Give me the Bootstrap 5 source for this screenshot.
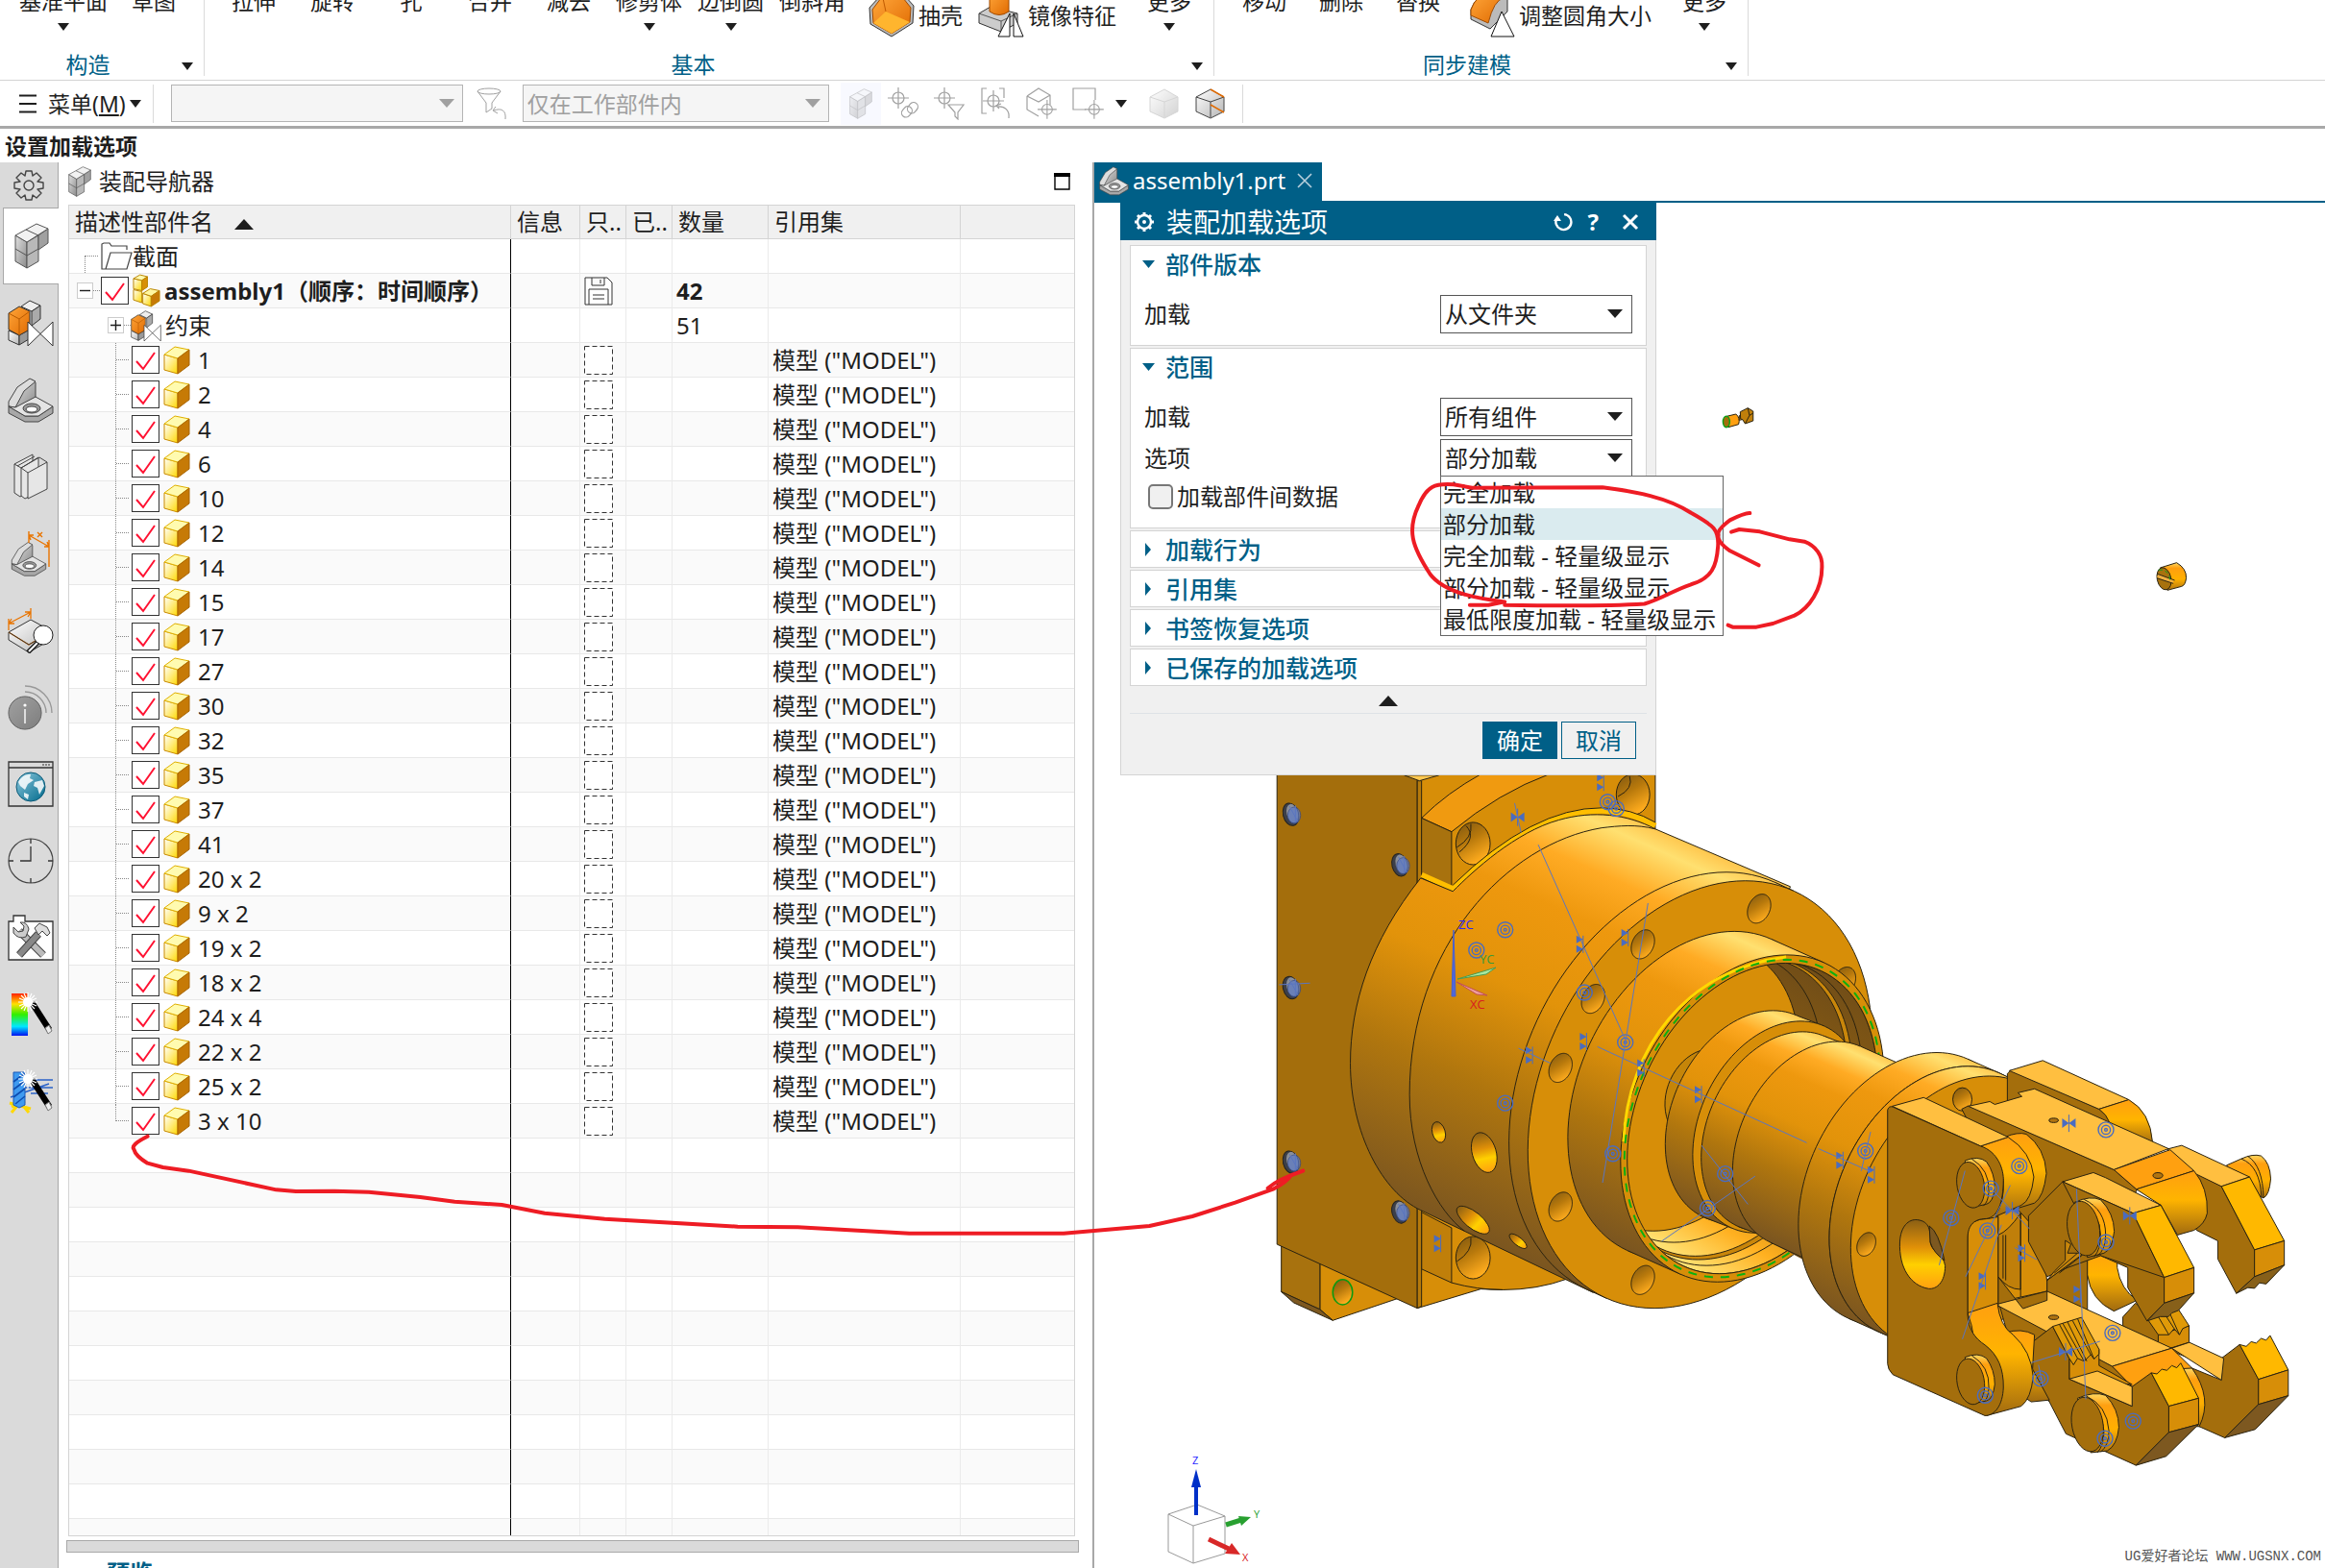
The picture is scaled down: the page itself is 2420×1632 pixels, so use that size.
<!DOCTYPE html>
<html lang="zh-CN">
<head>
<meta charset="utf-8">
<meta name="viewport" content="width=device-width, initial-scale=1">
<title>装配加载选项</title>
<link href="https://cdn.jsdelivr.net/npm/bootstrap@5.3.0/dist/css/bootstrap.min.css" rel="stylesheet">
<style>
:root{--nx-blue:#005f87;--nx-gray:#a8a8a8}
html,body{height:100%}
body{font-family:"Noto Sans","Noto Sans CJK SC",sans-serif;font-size:24px;line-height:32px;color:#1e1e1e;background:#fff;overflow:hidden}
button{color:inherit}
svg{display:block;flex:none}
.nx-app{min-height:100vh;height:100vh}
.bare{background:none;border:0;padding:0}
/* ribbon */
.ribbon{height:84px;font-size:23px;border-bottom:1px solid #d4d4d4;overflow:hidden}
.rgroup{height:79px;border-right:1px solid #dadada}
.rbody{height:53px;overflow:hidden}
.rtool{width:82px;height:53px;line-height:32px;display:flex;flex-direction:column;align-items:center;justify-content:flex-start}
.rtool>span{display:block;margin-top:-15px}
.rtool.wide{width:85px}
.rtool.more{width:78px}
.caret{display:inline-block;width:0;height:0;border:6px solid transparent;border-top:8px solid #1e1e1e;border-bottom:0;flex:none}
.rtool .caret{display:block;margin:7px auto 0}
.rside{height:32px;gap:4px;white-space:nowrap}
.rname{height:26px;line-height:28px;color:var(--nx-blue);padding-right:5px}
.rname .bare{width:24px;height:22px;line-height:22px}
/* selection toolbar */
.selbar{height:50px;border-bottom:3px solid var(--nx-gray);font-size:23px}
.vsep{width:1px;height:40px;background:#dadada}
.combo{appearance:none;height:39px;border:1px solid #b4b4b4;border-radius:0;color:#a0a0a0;opacity:1;padding:0 4px;font-size:23px;background:#f5f5f5 url("data:image/svg+xml,%3Csvg xmlns='http://www.w3.org/2000/svg' width='16' height='10'%3E%3Cpath d='M0 0h16l-8 9z' fill='%23a0a0a0'/%3E%3C/svg%3E") no-repeat right 8px center}
.selbtn{width:48px;height:44px}
.selbtn.on{width:42px;background:#f8f9ff}
.prompt-line{height:35px;font-size:23px;font-weight:700;padding-left:5px;line-height:36px}
/* resource bar */
.resbar{width:61px;background:#dadada;border-right:1px solid var(--nx-gray)}
.resbtn{height:80px;width:60px;flex:none;padding-left:4px}
.resbtn.first{height:47px;padding-left:0}
.resbtn.on{background:#fff;border:1px solid var(--nx-gray);border-right:0;width:58px;align-self:flex-end;margin-right:-1px;padding-left:0}
/* navigator */
.navpane{width:1076px;flex:none;padding-left:10px}
.navhead{height:44px;padding:0 23px 4px 0;font-size:24px}
.navgrid{width:1048px;flex:1 1 0;min-height:0;overflow:hidden;border:1px solid #d4d4d4}
.tree{table-layout:fixed;width:1046px;border-collapse:separate;border-spacing:0}
.tree th{height:35px;background:#f0f0f0;font-weight:400;padding:0 6px;border-right:1px solid #d4d4d4;border-bottom:1px solid #d4d4d4;white-space:nowrap;overflow:hidden}
.tree td{height:36px;padding:0 4px;border-right:1px solid #ebebeb;border-bottom:1px solid #e8e8e8;white-space:nowrap;line-height:34px}
.tree td:first-child{border-right:1px solid #000;padding:0}
.tree tr:nth-child(even) td{background:#fafafa}
.tree th:last-child,.tree td:last-child{border-right:0}
.nm{height:35px}
.tick{appearance:none;width:29px;height:29px;border:1px solid #333;background:#fff;margin:0;flex:none}
.tick:checked{background:#fff url("data:image/svg+xml,%3Csvg xmlns='http://www.w3.org/2000/svg' width='27' height='27'%3E%3Cpath d='M4 15l7 8L23 6' fill='none' stroke='%23ff1232' stroke-width='2'/%3E%3C/svg%3E")}
.branch{width:17px;height:35px;margin-left:48px;border-left:1px dotted #888;display:flex;align-items:center;flex:none}
.branch::after{content:"";width:13px;border-top:1px dotted #888}
.branch.end{height:18px;align-self:flex-start;align-items:flex-end}
.branch.top{height:18px;margin-left:16px;align-self:flex-end;align-items:flex-start}
.toggle{width:17px;height:17px;border:1px solid #ccc;background:#fff;flex:none}
.stub{width:7px;border-top:1px dotted #888}
.split{height:13px;width:1054px;margin:4px 0 0 -2px;background:#dadada;border:1px solid var(--nx-gray)}
.preview{height:16px;overflow:hidden;padding:5px 0 0 40px;font-weight:700;color:var(--nx-blue);line-height:32px}
/* graphics window */
.gfx{border-left:2px solid var(--nx-gray);min-width:0}
.ptabs{height:42px;border-bottom:2px solid var(--nx-blue)}
.ptab{width:237px;height:40px;background:var(--nx-blue);color:#fff;padding:0 10px 2px 5px}
.stage{position:relative;flex:1 1 0;min-height:0;overflow:hidden}
.stage>svg{position:absolute;left:0;top:0;width:100%;height:100%}
.stamp{position:absolute;right:4px;bottom:2px;font:14px/20px "Liberation Mono","Noto Sans CJK SC",monospace;color:#555}
/* dialog */
.dlg{position:absolute;left:27px;top:0;width:558px;height:596px;background:#f0f0f0;border:1px solid #d4d4d4;border-top:0}
.dlgtitle{height:39px;margin:0 -1px;background:var(--nx-blue);color:#fff;font-size:28px;padding:0 18px 0 14px}
.dlgbody{padding:5px 9px 0}
.sect{border:1px solid #d4d4d4;background:#fff;margin-bottom:2px}
.secthead{height:37px;font-size:25px;font-weight:500;color:var(--nx-blue);padding-left:12px;gap:11px}
.sect label{color:#1e1e1e}
.fld{height:43px;padding:0 14px}
.drop{appearance:none;width:200px;height:40px;border:1px solid #555;border-radius:0;background:#fff url("data:image/svg+xml,%3Csvg xmlns='http://www.w3.org/2000/svg' width='16' height='10'%3E%3Cpath d='M0 0h16l-8 9z' fill='%231e1e1e'/%3E%3C/svg%3E") no-repeat right 9px center;padding:0 4px;color:#1e1e1e}
.dcheck{appearance:none;width:26px;height:26px;border:2px solid #777;border-radius:5px;background:#f0f0f0;margin:0}
.tri-d,.tri-r{width:13px;flex:none}
.optlist{position:absolute;left:332px;top:284px;width:295px;border:1px solid #666;background:#fff;z-index:3}
.optlist button{display:block;width:100%;height:33px;padding-left:2px;text-align:left;white-space:nowrap}
.optlist .on{background:#daebef}
.dlgbtn{width:78px;height:39px;border:1px solid var(--nx-blue);border-radius:0;padding:0;font-size:24px;line-height:34px;color:var(--nx-blue)}
.dlgbtn.ok{background:var(--nx-blue);color:#fff}
.ink{position:absolute;left:0;top:0;width:100%;height:100%;pointer-events:none;z-index:5}
.ink path{fill:none;stroke:#ee1c24;stroke-width:4px;stroke-linecap:round;stroke-linejoin:round;vector-effect:non-scaling-stroke}
#cad *{vector-effect:non-scaling-stroke}
#cad .ln{fill:none;stroke:#2b2310;stroke-width:1}
#cad .f{stroke:#2b2310;stroke-width:1}
#cad .bl{fill:none;stroke:#5b76c0;stroke-width:1}
</style>
<script src="https://cdn.jsdelivr.net/npm/bootstrap@5.3.0/dist/js/bootstrap.bundle.min.js"></script>
</head>
<body>
<svg width="0" height="0" class="position-absolute" aria-hidden="true">
<defs>
<linearGradient id="gy" x1="0" y1="0" x2="1" y2="1"><stop offset="0" stop-color="#fff"/><stop offset="1" stop-color="#ffd800"/></linearGradient>
<linearGradient id="gg" x1="0" y1="0" x2="1" y2="1"><stop offset="0" stop-color="#fff"/><stop offset="1" stop-color="#b5b5b5"/></linearGradient>
<linearGradient id="gd" x1="0" y1="0" x2="1" y2="1"><stop offset="0" stop-color="#e0e0e0"/><stop offset="1" stop-color="#8a8a8a"/></linearGradient>
<linearGradient id="go" x1="0" y1="0" x2="1" y2="1"><stop offset="0" stop-color="#ffa63a"/><stop offset="1" stop-color="#e06a00"/></linearGradient>
<linearGradient id="gt" x1="0" y1="0" x2="1" y2="1"><stop offset="0" stop-color="#8cc7dc"/><stop offset="1" stop-color="#006a8c"/></linearGradient>
<linearGradient id="gr" x1="0" y1="0" x2="0" y2="1"><stop offset="0" stop-color="#ff2000"/><stop offset=".25" stop-color="#ffe000"/><stop offset=".5" stop-color="#30f000"/><stop offset=".78" stop-color="#00e8ff"/><stop offset="1" stop-color="#0010f0"/></linearGradient>
</defs>
<symbol id="i-cube" viewBox="0 0 28 30"><path d="M1 9L15 13V29L1 25z" fill="url(#gy)" stroke="#c98a00"/><path d="M1 9L12 1l15 3-12 9z" fill="#fffbb0" stroke="#e0b000"/><path d="M15 13L27 4v16L15 29z" fill="#c67a06" stroke="#a86400"/></symbol>
<symbol id="i-asm" viewBox="0 0 30 36"><g stroke="#b88400"><path d="M1 5l9 2v11L1 16z" fill="url(#gy)"/><path d="M1 5l7-4 8 2-6 4z" fill="#fffbb0"/><path d="M10 7l6-4v11l-6 4z" fill="#d89008"/><path d="M1 17l9 2v12l-9-3z" fill="url(#gy)"/><path d="M11 21l9 3v11l-9-3z" fill="url(#gy)"/><path d="M11 21l8-5 10 2-9 6z" fill="#fff7a0"/><path d="M20 24l9-6v11l-9 6z" fill="#c67a06"/></g></symbol>
<symbol id="i-blocks" viewBox="0 0 36 48"><g stroke="#555"><path d="M1 13l12 7v27L1 40z" fill="url(#gd)"/><path d="M13 20l12-7v27l-12 7z" fill="#b8b8b8"/><path d="M25 13l10-7v15l-10 7z" fill="#a0a0a0"/><path d="M1 13L23 1l12 5-22 14z" fill="#f2f2f2"/><path d="M1 27l12 7 12-7M12 7l13 6" fill="none"/></g></symbol>
<symbol id="i-con" viewBox="0 0 48 48"><g stroke="#333"><path d="M14 7l9-6 11 5-9 6z" fill="#eee"/><path d="M25 12l9-6v14l-9 7z" fill="#aaa"/><path d="M1 32l11 5v10L1 42z" fill="url(#gg)"/><path d="M12 37l10-6v10l-10 6z" fill="#999"/><path d="M1 14L12 7l11 5v19l-11 6-11-6z" fill="url(#go)"/><path d="M1 14l11 6 11-8M12 20v17" fill="none" stroke="#b85a00"/><path d="M21 23v25l26-25v25z" fill="#fff"/></g></symbol>
<symbol id="i-brk" viewBox="0 0 48 48"><g stroke="#444" stroke-linejoin="round"><path d="M8 29L11 17 25 3l4 3v20L8 32z" fill="url(#gd)"/><path d="M1 31V26L10 11 23 2l6 3-12 10L8 32z" fill="#ddd"/><path d="M1 31v7l17 9h14l15-9v-7L32 41H18z" fill="#a8a8a8"/><path d="M1 31l7 1 21-11 18 10-15 10H18z" fill="#e4e4e4"/><ellipse cx="25" cy="33" rx="9" ry="5" fill="#999"/><ellipse cx="25" cy="34" rx="6" ry="3" fill="#fff"/></g></symbol>
<symbol id="i-book" viewBox="0 0 36 48"><g fill="#e6e6e6" stroke="#444"><path d="M1 11L20 1v36L7 45l-6-4z"/><path d="M8 15L26 4v36L12 47l-4-3z"/><path d="M15 20L35 9v28L15 47z"/><path d="M1 11l7 4 7 5M8 15L27 4l8 5M4 13L22 3" fill="none"/></g></symbol>
<symbol id="i-gear" viewBox="0 0 34 34"><path d="M14 2h6l1 5 4-3 5 5-4 4 6 1v6l-6 1 4 4-5 5-4-3-1 5h-6l-1-5-4 3-5-5 4-4-6-1v-6l6-1-4-4 5-5 4 3z" fill="none" stroke="#444" stroke-width="1.4" stroke-linejoin="round"/><circle cx="17" cy="17" r="5" fill="none" stroke="#444" stroke-width="1.4"/></symbol>
<symbol id="i-wand" viewBox="0 0 48 48"><path d="M23 14l5-4 18 28-5 4z" fill="#000"/><path d="M39 38l4-3 3 6-4 3z" fill="#eee" stroke="#777"/><path d="M21 1v20M11 11h20M14 4l14 14M28 4L14 18M25 2l-8 18M17 2l8 18M12 7l18 8M12 15l18-8" stroke="#fff" stroke-width="1.2"/><circle cx="21" cy="11" r="5" fill="#fff"/></symbol>
<symbol id="i-mark" viewBox="-8 -8 16 16" overflow="visible"><g fill="none" stroke="#4a6cc0" stroke-width="1.4"><circle r="8"/><circle r="4.6"/><circle r="1.4"/></g></symbol>
<symbol id="i-tie" viewBox="-8 -8 16 16" overflow="visible"><path d="M-7-5v10L0 0zM7-5v10L0 0z" fill="#4a6cc0"/><path d="M0-9V9" stroke="#4a6cc0"/></symbol>
<symbol id="i-tiev" viewBox="-8 -8 16 16" overflow="visible"><path d="M-4-9v8L3-5zM-4 9V1L3 5z" fill="#4a6cc0"/><path d="M3-9V9" stroke="#4a6cc0"/></symbol>
</svg>

<div class="nx-app d-flex flex-column position-relative">
<header class="ribbon d-flex">
  <section class="rgroup d-flex flex-column" style="width:213px">
    <div class="rbody d-flex" style="padding-left:20px">
      <button class="bare rtool" style="width:92px"><span>基准平面</span><i class="caret"></i></button>
      <button class="bare rtool" style="width:96px"><span>草图</span></button>
    </div>
    <div class="rname d-flex"><span class="flex-fill text-center">构造</span><button class="bare" aria-label="构造选项"><i class="caret"></i></button></div>
  </section>
  <section class="rgroup d-flex flex-column" style="width:1051px">
    <div class="rbody d-flex" style="padding-left:10px">
      <button class="bare rtool"><span>拉伸</span></button><button class="bare rtool"><span>旋转</span></button><button class="bare rtool"><span>孔</span></button><button class="bare rtool"><span>合并</span></button><button class="bare rtool"><span>减去</span></button>
      <button class="bare rtool wide"><span>修剪体</span><i class="caret"></i></button><button class="bare rtool wide"><span>边倒圆</span><i class="caret"></i></button><button class="bare rtool wide"><span>倒斜角</span></button>
      <button class="bare rside d-flex align-items-center ms-3">
        <svg width="48" height="56" viewBox="0 0 48 56"><path d="M1 20L12 8h26l9 10-1 18-22 14L2 37z" fill="#bbb" stroke="#333"/><path d="M4 22L13 10h23l8 10-1 15-19 12L5 36z" fill="url(#go)" stroke="#a04a00"/><path d="M5 36l13-12 25 11-19 12z" fill="#ffb52e"/><path d="M18 24L15 10" stroke="#c05a00"/></svg>抽壳</button>
      <button class="bare rside d-flex align-items-center ms-3">
        <svg width="48" height="56" viewBox="0 0 48 56"><path d="M1 26l12-7 28 7v10L24 45 1 36z" fill="#ccc" stroke="#333"/><path d="M1 26l23 8 17-8M24 34v11" fill="none" stroke="#555"/><path d="M12 4v20q10 7 20 0V4z" fill="url(#go)" stroke="#a04a00"/><path d="M33 26v24H21zM37 26v24h10z" fill="#fff" stroke="#111"/></svg>镜像特征</button>
      <button class="bare rtool more ms-3"><span>更多</span><i class="caret"></i></button>
    </div>
    <div class="rname d-flex"><span class="flex-fill text-center" style="padding-right:4px">基本</span><button class="bare" aria-label="基本选项"><i class="caret"></i></button></div>
  </section>
  <section class="rgroup d-flex flex-column" style="width:556px">
    <div class="rbody d-flex" style="padding-left:12px">
      <button class="bare rtool" style="width:80px"><span>移动</span></button><button class="bare rtool" style="width:80px"><span>删除</span></button><button class="bare rtool" style="width:80px"><span>替换</span></button>
      <button class="bare rside d-flex align-items-center" style="margin-left:13px">
        <svg width="48" height="56" viewBox="0 0 48 56"><path d="M2 22Q8 6 20 6h20v18L22 42 2 32z" fill="#bbb" stroke="#333"/><path d="M2 22Q8 6 20 6l16 4Q26 12 20 36L2 28z" fill="url(#go)" stroke="#a04a00"/><path d="M34 24l13 26H23z" fill="#fff" stroke="#111"/></svg>调整圆角大小</button>
      <button class="bare rtool more ms-3"><span>更多</span><i class="caret"></i></button>
    </div>
    <div class="rname d-flex"><span class="flex-fill text-center">同步建模</span><button class="bare" aria-label="同步建模选项"><i class="caret"></i></button></div>
  </section>
</header>

<nav class="selbar d-flex align-items-center" aria-label="选择条">
  <button class="bare d-flex align-items-center" style="padding-left:20px"><svg width="18" height="20" viewBox="0 0 18 20" class="me-2"><path d="M0 1.5h18M0 10h18M0 18.5h18" stroke="#1e1e1e" stroke-width="2"/></svg><span class="ms-1 me-1">菜单(<u>M</u>)</span><i class="caret"></i></button>
  <span class="vsep" style="margin:0 18px 0 12px"></span>
  <select class="combo" style="width:304px" disabled aria-label="类型过滤器"><option></option></select>
  <button class="bare d-flex align-items-center justify-content-center" style="width:62px" aria-label="重置过滤器"><svg width="34" height="34" viewBox="0 0 34 34" fill="none" stroke="#a0a0a0"><ellipse cx="13" cy="4" rx="12" ry="3"/><path d="M1 4l9 12v10l6-4v-6l9-12M20 20l-3 4 5 3M18 24c8-3 13 0 12 9"/></svg></button>
  <select class="combo" style="width:319px" disabled aria-label="选择范围"><option>仅在工作部件内</option></select>
  <button class="bare selbtn on d-flex align-items-center justify-content-center" style="margin-left:12px" aria-label="装配"><svg width="24" height="32" opacity=".35"><use href="#i-blocks"/></svg></button>
  <span class="d-flex" id="selicons"></span>
  <span class="vsep" style="margin-left:9px"></span>
</nav>
<div class="prompt-line">设置加载选项</div>

<main class="d-flex flex-fill" style="min-height:0">
  <aside class="resbar d-flex flex-column flex-shrink-0" id="resbar"></aside>
  <section class="navpane d-flex flex-column">
    <div class="navhead d-flex align-items-center">
      <svg width="24" height="32" class="me-2"><use href="#i-blocks"/></svg><span>装配导航器</span>
      <button class="bare ms-auto" aria-label="最大化"><svg width="17" height="18"><path d="M1 1h15v16H1z" fill="#fff" stroke="#000" stroke-width="1.4"/><path d="M0 2h17" stroke="#000" stroke-width="4"/></svg></button>
    </div>
    <div class="navgrid">
      <table class="tree">
        <colgroup><col style="width:460px"><col style="width:72px"><col style="width:48px"><col style="width:48px"><col style="width:100px"><col style="width:200px"><col></colgroup>
        <thead><tr><th>描述性部件名 <svg class="d-inline-block ms-3" width="20" height="11"><path d="M0 11L10 0l10 11z" fill="#1e1e1e"/></svg></th><th>信息</th><th>只..</th><th>已..</th><th>数量</th><th>引用集</th><th></th></tr></thead>
        <tbody id="rows"></tbody>
      </table>
    </div>
    <div class="split"></div>
    <div class="preview">预览</div>
  </section>

  <section class="gfx d-flex flex-column flex-fill">
    <div class="ptabs d-flex"><div class="ptab d-flex align-items-center">
      <svg width="31" height="36" class="me-1"><use href="#i-brk"/></svg><span>assembly1.prt</span>
      <button class="bare ms-auto" aria-label="关闭"><svg width="16" height="16"><path d="M1 1l14 14M15 1L1 15" stroke="#b8d0dc" stroke-width="1.6"/></svg></button></div></div>
    <div class="stage">
      <svg id="cad" viewBox="1139 211 1281 1421" preserveAspectRatio="xMinYMin slice" role="img" aria-label="装配模型">
        <defs>
          <linearGradient id="hole" x1="0" y1="0" x2=".5" y2="1"><stop offset="0" stop-color="#7b5512"/><stop offset=".5" stop-color="#b8790c"/><stop offset="1" stop-color="#ffac1e"/></linearGradient>
          <linearGradient id="arm" x1="0" y1="0" x2="0" y2="1"><stop offset="0" stop-color="#ff9f10"/><stop offset=".45" stop-color="#ffb400"/><stop offset="1" stop-color="#a06a10"/></linearGradient>
          <linearGradient id="cyl" x1="0" y1="0" x2="0" y2="1"><stop offset="0" stop-color="#ffd860"/><stop offset=".2" stop-color="#ff9f10"/><stop offset=".6" stop-color="#ffb000"/><stop offset="1" stop-color="#b07410"/></linearGradient>
          <linearGradient id="slot" x1="0" y1="0" x2="0" y2="1"><stop offset="0" stop-color="#8a5f14"/><stop offset=".4" stop-color="#e09008"/><stop offset=".65" stop-color="#ffd000"/><stop offset="1" stop-color="#ff9f10"/></linearGradient>
          <linearGradient id="wall" x1=".8" y1="0" x2=".3" y2="1"><stop offset="0" stop-color="#6f4c18"/><stop offset=".6" stop-color="#a8700c"/><stop offset=".85" stop-color="#ffb020"/><stop offset="1" stop-color="#ffe070"/></linearGradient>
          <clipPath id="bore"><circle r="396" transform="matrix(.71 0 -.1945 1 1151 941)"/></clipPath>
        </defs>
        <g id="base" transform="translate(1310 780) scale(.446429 .408163)">
          <path class="f" fill="#d78e08" d="M143 1310L325 1400L173 1456L143 1428z"/>
          <path class="f" fill="#a8720e" d="M53 1265L143 1310V1428L53 1383z"/>
          <path class="f" fill="#7d5820" d="M53 1383L143 1428L173 1456L82 1411z"/>
          <ellipse cx="196" cy="1384" rx="23" ry="32" fill="url(#hole)" stroke="#0a9a10" stroke-width="1.5"/>
          <path class="f" fill="#d78e08" d="M370 60H925V700H720V1350Q650 1378 570 1378L518 1376L370 1425z"/>
          <path class="f" fill="#c07f0a" d="M380 1180L450 1220V1360L380 1325z"/>
          <path class="ln" d="M450 1360Q510 1378 570 1378"/>
          <path class="f" fill="#a46e0c" d="M43 60H370V1425L43 1262z"/>
          <path class="f" fill="#b57a0c" d="M370 80H380V1420L370 1425z"/>
          <path class="f" fill="#ffc850" d="M340 66H420L375 80z"/>
          <path class="f" fill="#f09a10" d="M380 175Q440 110 520 62H680Q560 110 450 210z"/>
          <path class="f" fill="#a8720e" d="M380 175L450 210V352L380 318z"/>
          <ellipse class="f" cx="500" cy="240" rx="40" ry="54" fill="url(#hole)"/><path class="ln" d="M462 250Q500 225 495 190M468 262Q510 225 484 195"/>
          <ellipse class="f" cx="873" cy="115" rx="39" ry="52" fill="url(#hole)"/><path class="ln" d="M838 120Q875 100 865 68"/>
          <ellipse class="f" cx="500" cy="1296" rx="40" ry="54" fill="url(#hole)"/><path class="ln" d="M462 1306Q500 1280 495 1245"/>
          <path d="M380 320L453 356Q640 155 800 156Q870 158 925 195" fill="none" stroke="#ffbe00" stroke-width="6"/>
          <path class="ln" d="M380 328L453 364M453 346Q640 148 800 149Q870 150 925 186"/>
          <g id="solids"></g>
        </g>
        <g id="grip" transform="translate(1880 1040) scale(.344388 .377551)">
          <ellipse class="f" cx="472" cy="276" rx="29" ry="32" fill="url(#hole)"/>
          <path class="f" fill="#a46e0c" d="M608 205L618 196L885 303Q925 325 935 362L608 290z"/>
          <path class="f" fill="#ffbf40" d="M614 197L715 169L975 277L885 303z"/>
          <path class="f" fill="url(#arm)" d="M885 303L975 277Q1040 310 1047 395L925 400Q930 330 885 303z"/>
          <path class="f" fill="url(#cyl)" d="M1270 458L1315 440Q1350 425 1375 432Q1402 450 1404 495Q1400 540 1382 548L1340 530z"/>
          <path class="ln" d="M1315 440Q1372 460 1376 545M1335 433Q1380 460 1382 547"/>
          <path class="f" fill="#a46e0c" d="M1095 412L1255 516L1355 691V765L1300 811L1244 716V666L1180 637L1120 560z"/>
          <path class="f" fill="#ffbf40" d="M1092 413L1135 403L1340 490L1255 516L1165 476z"/>
          <path class="f" fill="#ffb800" d="M1255 516L1340 490L1445 666L1355 691z"/>
          <path class="f" fill="#d78e08" d="M1355 691L1445 666V733L1355 765z"/>
          <path class="f" fill="#87601a" d="M1355 765L1445 733L1390 785L1370 782L1355 797L1335 795L1300 811z"/>
          <path class="f" fill="#d78e08" d="M580 570H648L700 560L728 780V835L655 853L580 830z"/>
          <path class="f" fill="#c07f0a" d="M580 650Q610 640 648 590V800Q610 800 580 765z"/><path class="ln" d="M595 650V770M603 650V775M648 570V850"/>
          <path class="f" fill="#a46e0c" d="M470 303L490 294L930 470L1000 525L900 700L780 720L620 560z"/>
          <path class="f" fill="#ffbf40" d="M490 295L555 282L570 290L652 268L640 258L690 247L1095 412L930 470z"/>
          <path class="f" fill="#ffa010" d="M930 470L1100 415L1172 473L998 524z"/>
          <path class="f" fill="url(#arm)" d="M998 524L1172 473Q1215 520 1212 590Q1205 620 1172 637L1122 650L1072 568z"/>
          <ellipse class="f" cx="748" cy="334" rx="14" ry="6" fill="#b07410"/><ellipse class="f" cx="1063" cy="486" rx="15" ry="8" fill="#b07410"/>
          <path class="f" fill="#a46e0c" d="M728 775L850 690V862L728 830z"/>
          <path class="f" fill="url(#arm)" d="M850 700L940 680V740Q950 800 1000 830L930 860Q860 830 850 760z"/>
          <path class="f" fill="#a46e0c" d="M957 876L995 838L1060 880L1157 946V990L1030 940L957 900z"/>
          <path class="f" fill="#d78e08" d="M1064 925L1157 900V946L1100 962L1064 950z"/>
          <path class="f" fill="#e09a08" d="M1030 880L1125 855L1157 900L1138 908L1128 925L1112 908L1096 925L1064 925z"/><path class="ln" d="M1064 875L1096 925M1085 870L1112 908M1100 868L1128 925"/>
          <path class="f" fill="#a46e0c" d="M580 830L925 1012L985 1064L900 1110L735 1110L620 960z"/>
          <path class="f" fill="#ffbf40" d="M580 845V835L728 805L1105 962L925 1012z"/><path class="f" fill="#a46e0c" d="M580 765L655 853L728 830V805L580 840z"/>
          <ellipse class="f" cx="748" cy="877" rx="15" ry="6" fill="#b07410"/>
          <path class="f" fill="#ffa010" d="M925 1012L1105 962L1166 1017L985 1068z"/>
          <path class="f" fill="url(#cyl)" d="M1105 1020L1166 1017Q1215 1040 1218 1110Q1215 1165 1190 1178L1120 1178z"/>
          <path class="f" fill="#a46e0c" d="M1166 1017L1255 1050V990L1310 952L1367 1048V1117L1265 1209L1188 1178Q1230 1100 1166 1017z"/>
          <path class="f" fill="#ffbf40" d="M1105 962L1158 946L1262 990L1255 1050z"/>
          <path class="f" fill="#ffb800" d="M1310 952L1330 957L1345 944L1360 948L1375 935L1390 940L1402 927L1457 1022L1367 1048z"/>
          <path class="f" fill="#d78e08" d="M1367 1048L1457 1022V1093L1367 1117z"/>
          <path class="f" fill="#7d5820" d="M1367 1117L1457 1093L1357 1186L1265 1209z"/>
          <path class="f" fill="#a46e0c" d="M672 597L775 503L1072 568L1082 767V838L1030 887L972 795V740L890 707L790 740L728 765L672 668z"/>
          <path class="f" fill="#c9860a" d="M783 665L800 675L790 700L840 700L728 775L750 750L783 720z"/><path class="ln" d="M750 755L820 700M765 755L835 705"/>
          <path class="f" fill="#ffbf40" d="M775 503L868 478L905 492L1072 568L988 590z"/>
          <path class="f" fill="#a46e0c" d="M775 503L988 590L1082 767L890 707z"/>
          <path class="f" fill="#ffb800" d="M988 590L1072 568L1172 740L1082 767z"/>
          <path class="f" fill="#d78e08" d="M1082 767L1172 740V810L1082 838z"/>
          <path class="f" fill="#87601a" d="M1082 838L1172 810L1125 858L1105 865L1095 875L1070 875L1030 887z"/>
          <path class="f" fill="url(#cyl)" d="M810 560Q860 540 890 553Q930 590 931 640Q925 690 900 700L850 712z"/>
          <path class="ln" d="M840 552Q905 580 905 650Q905 690 880 708M825 556Q890 590 890 650Q890 690 870 710"/>
          <ellipse class="f" cx="838" cy="632" rx="48" ry="76" transform="rotate(-12 838 632)" fill="#a46e0c"/>
          <path class="f" fill="#d78e08" d="M795 990L885 965V1010L985 1062L795 1047z"/>
          <path class="f" fill="#a46e0c" d="M684 945L745 902L795 990V1047L985 1122V1068L1043 1030L1096 1122V1194L997 1285L785 1198L735 1110L684 1020z"/>
          <path class="f" fill="#ffbf40" d="M795 1047L880 1025L985 1068V1122z"/>
          <path class="f" fill="#e09a08" d="M745 902L832 877L885 965V978L870 992L860 980L840 998L820 990L808 1008L795 990z"/><path class="ln" d="M765 896L820 990M775 893L840 998M790 890L848 998M805 886L860 980M820 880L870 992"/>
          <path class="f" fill="#ffb800" d="M1043 1030L1060 1033L1075 1020L1090 1023L1105 1010L1120 1016L1132 1003L1186 1100L1096 1122z"/>
          <path class="f" fill="#d78e08" d="M1096 1122L1186 1100V1172L1096 1194z"/>
          <path class="f" fill="#7d5820" d="M1096 1194L1186 1172L1088 1260L997 1285z"/>
          <path class="f" fill="url(#cyl)" d="M820 1100Q870 1080 905 1092Q945 1130 945 1180Q940 1230 910 1245L860 1250z"/>
          <path class="ln" d="M845 1093Q910 1120 915 1190Q915 1230 890 1248M832 1097Q895 1125 900 1190Q900 1230 880 1250"/>
          <ellipse class="f" cx="850" cy="1172" rx="47" ry="76" transform="rotate(-12 850 1172)" fill="#a46e0c"/>
          <path class="f" fill="url(#arm)" d="M600 380Q640 365 665 372Q722 410 726 480Q718 545 690 562L590 590z"/>
          <path class="f" fill="url(#arm)" d="M600 920Q650 905 690 925L684 1020L735 1105L680 1110L600 1060z"/>
          <path class="f" fill="url(#arm)" d="M527 405L610 380Q680 420 688 490Q680 555 650 568L570 600Q600 560 596 500Q590 430 527 405z"/>
          <path class="f" fill="#d78e08" d="M488 640Q495 605 550 605L580 600V850L488 870z"/>
          <path class="f" fill="url(#arm)" d="M488 865L578 838Q585 900 625 925Q680 970 686 1040Q680 1100 650 1122L545 1148L500 900z"/>
          <path class="f" fill="#ffbf40" d="M260 295L355 271L610 380L527 405z"/>
          <path class="f" fill="#a46e0c" fill-rule="evenodd" d="M246 305Q250 293 262 297L527 405C580 420 597 470 596 500C595 560 580 600 545 605C500 605 488 630 488 660V870C490 910 510 935 540 953C580 980 597 1020 596 1070C594 1120 570 1148 540 1148L262 1035Q246 1020 246 1005z"/>
          <path class="f" fill="url(#slot)" d="M283 670C285 625 310 606 335 608C375 612 375 640 375 670C380 700 415 700 420 735C420 780 395 800 370 798C315 790 280 740 283 670z"/>
          <path class="f" fill="#7d5820" d="M372 625Q400 640 418 720Q385 700 375 670z"/>
          <g id="pins"><path class="f" fill="url(#cyl)" d="M480 445Q520 430 545 448Q570 480 570 520Q565 560 545 565L510 572z"/><path class="ln" d="M500 440Q555 470 552 530Q550 560 535 570"/><ellipse class="f" cx="497" cy="512" rx="41" ry="64" transform="rotate(-12 497 512)" fill="#a46e0c"/></g>
          <use href="#pins" y="542"/>
        </g>
        <g id="marks"></g>
        <g class="bl" transform="translate(1310 780) scale(.446429 .408163)">
          <path d="M652 243L855 740M908 392L802 1105M790 758L1278 1003M606 762L680 800M1033 1010L1141 1160M940 1254L1158 1088M1305 1018L1430 1078M1427 975L1405 1075M48 600L120 596M597 137L612 212"/>
        </g>
        <g class="bl" transform="translate(1880 1040) scale(.344388 .377551)">
          <path d="M480 473L402 733M617 513L482 765M590 622L472 937M558 522L675 633M817 523L845 1103M680 1002L888 943M630 685L697 718M702 1008L715 1065"/>
        </g>
        <g stroke-width="1" font-family="Open Sans,sans-serif" font-size="13">
          <path d="M1511 1037L1513 968L1515 1037z" fill="#5068d8" stroke="#4860d0"/><path d="M1517 1019L1557 1007L1547 1014z" fill="#a8e8a0" stroke="#4a9a50"/><path d="M1516 1022L1548 1036L1537 1035z" fill="#f0a0a0" stroke="#c05050"/>
          <text x="1518" y="967" fill="#2828ff">ZC</text><text x="1540" y="1003" fill="#3a9a3a">YC</text><text x="1530" y="1050" fill="#d82020">XC</text>
          <path d="M1216 1576L1246 1566L1275 1578L1242 1588zM1216 1576V1615L1242 1627V1588M1242 1627L1275 1617V1578" fill="none" stroke="#999"/>
          <path d="M1245 1577V1545" stroke="#0030c8" stroke-width="4"/><path d="M1240 1548L1245 1529L1250 1548z" fill="#0030c8"/>
          <path d="M1276 1587L1292 1582" stroke="#28a030" stroke-width="5"/><path d="M1289 1578L1302 1579L1292 1588z" fill="#28a030"/>
          <path d="M1258 1602L1279 1612" stroke="#d82828" stroke-width="5"/><path d="M1282 1606L1291 1618L1275 1617z" fill="#d82828"/>
          <text x="1241" y="1524" font-size="11" fill="#2828ff">Z</text><text x="1305" y="1580" font-size="11" fill="#28a030">Y</text><text x="1293" y="1625" font-size="11" fill="#d82020">X</text>
        </g>
        <g transform="translate(1780 400) scale(.344388 .333333)">
          <path class="f" fill="#ffa010" d="M50 100L78 93Q92 105 86 125L55 134z"/><ellipse cx="49" cy="117" rx="10" ry="17" fill="#a46e0c" stroke="#0aa018" stroke-width="1.5"/><path class="f" fill="#ffa010" d="M88 98L105 94V108L88 112z"/><path class="f" fill="#c07f0a" d="M91 86L114 74L130 84V114L106 123L98 110L92 108z"/><path class="ln" d="M114 74L119 97L106 123M119 97L130 90"/>
          <path class="f" fill="url(#cyl)" d="M1360 573L1410 557Q1440 575 1439 605Q1436 628 1425 631L1382 643z"/><ellipse class="f" cx="1372" cy="607" rx="21" ry="35" transform="rotate(-12 1372 607)" fill="#a8720e"/><path d="M1352 598L1400 617" stroke="#f0b040" stroke-width="4"/><path class="ln" d="M1352 592L1404 612M1350 605L1400 622"/><path d="M1355 580Q1385 575 1390 610" fill="none" stroke="#0aa018" stroke-dasharray="4 3"/>
        </g>
      </svg>
      <span class="stamp">UG爱好者论坛 WWW.UGSNX.COM</span>

      <div class="dlg" role="dialog" aria-label="装配加载选项">
        <div class="dlgtitle d-flex align-items-center">
          <svg width="22" height="22" viewBox="0 0 22 22" class="me-2"><circle cx="11" cy="11" r="7" fill="none" stroke="#fff" stroke-width="2.4"/><circle cx="11" cy="11" r="2" fill="#fff"/><path d="M11 1v3M11 18v3M1 11h3M18 11h3M4 4l2 2M16 16l2 2M18 4l-2 2M6 16l-2 2" stroke="#fff" stroke-width="3"/></svg>
          <span class="ms-1">装配加载选项</span>
          <button class="bare ms-auto" aria-label="重置"><svg width="20" height="20" viewBox="0 0 20 20"><path d="M10 2a8 8 0 1 1-7 5" fill="none" stroke="#fff" stroke-width="2.4" transform="rotate(8 10 10)"/><path d="M0 9l4-6 4 6z" fill="#fff"/></svg></button>
          <button class="bare fw-bold fs-4 ms-3 me-4" aria-label="帮助">?</button>
          <button class="bare" aria-label="关闭"><svg width="18" height="18"><path d="M2 2l14 14M16 2L2 16" stroke="#fff" stroke-width="3"/></svg></button>
        </div>
        <div class="dlgbody">
          <div class="sect" style="height:105px">
            <div class="secthead d-flex align-items-center"><i class="tri-d"><svg width="13" height="8"><path d="M0 0h13L6.5 8z" fill="#005f87"/></svg></i>部件版本</div>
            <div class="fld d-flex align-items-center justify-content-between" style="margin-top:12px"><label for="s1">加载</label><select id="s1" class="drop"><option>从文件夹</option></select></div>
          </div>
          <div class="sect" style="height:188px">
            <div class="secthead d-flex align-items-center"><i class="tri-d"><svg width="13" height="8"><path d="M0 0h13L6.5 8z" fill="#005f87"/></svg></i>范围</div>
            <div class="fld d-flex align-items-center justify-content-between" style="margin-top:12px"><label for="s2">加载</label><select id="s2" class="drop"><option>所有组件</option></select></div>
            <div class="fld d-flex align-items-center justify-content-between"><label for="s3">选项</label><select id="s3" class="drop"><option>部分加载</option></select></div>
            <div class="fld d-flex align-items-center" style="height:38px"><input class="dcheck ms-1 me-1" type="checkbox" id="c1"><label for="c1">加载部件间数据</label></div>
          </div>
          <div class="sect"><div class="secthead d-flex align-items-center"><i class="tri-r"><svg width="13" height="14"><path d="M3 0v14l6-7z" fill="#005f87"/></svg></i>加载行为</div></div>
          <div class="sect"><div class="secthead d-flex align-items-center"><i class="tri-r"><svg width="13" height="14"><path d="M3 0v14l6-7z" fill="#005f87"/></svg></i>引用集</div></div>
          <div class="sect"><div class="secthead d-flex align-items-center"><i class="tri-r"><svg width="13" height="14"><path d="M3 0v14l6-7z" fill="#005f87"/></svg></i>书签恢复选项</div></div>
          <div class="sect"><div class="secthead d-flex align-items-center"><i class="tri-r"><svg width="13" height="14"><path d="M3 0v14l6-7z" fill="#005f87"/></svg></i>已保存的加载选项</div></div>
          <div class="d-flex justify-content-center align-items-center border-bottom" style="height:27px"><button class="bare" aria-label="收起"><svg width="20" height="11"><path d="M0 11L10 0l10 11z" fill="#1e1e1e"/></svg></button></div>
          <div class="d-flex justify-content-end gap-1 mt-2" style="padding-right:11px"><button class="btn dlgbtn ok">确定</button><button class="btn dlgbtn">取消</button></div>
        </div>
        <div class="optlist" role="listbox" aria-label="选项">
          <button class="bare" role="option">完全加载</button><button class="bare on" role="option">部分加载</button><button class="bare" role="option">完全加载 - 轻量级显示</button><button class="bare" role="option">部分加载 - 轻量级显示</button><button class="bare" role="option">最低限度加载 - 轻量级显示</button>
        </div>
      </div>
    </div>
  </section>
</main>
<svg class="ink" viewBox="0 0 2420 1632" preserveAspectRatio="xMinYMin slice" aria-hidden="true">
  <g transform="translate(0 1140) scale(.892857 .333333)"><path d="M172 128Q152 155 156 168Q158 190 172 212L190 225L220 236L322 295L345 300L390 299L430 302L490 318L530 332L585 342L635 368L705 386L860 410L930 412L1060 431H1240L1340 408L1390 378L1440 335L1485 292Q1500 270 1505 250L1519 236M1478 290Q1490 262 1519 236"/></g>
  <g transform="translate(1130 160) scale(.484694 .420918)"><path d="M825 1116L865 1116L900 1108C840 1100 770 1085 740 1040C700 970 690 930 715 870C733 820 750 815 790 818L830 826L1110 825C1180 835 1250 850 1300 888C1350 920 1360 930 1358 970C1355 1020 1345 1050 1300 1065C1260 1080 1240 1100 1200 1113C1130 1118 1000 1118 900 1116"/></g>
  <g transform="translate(1780 400) scale(.344388 .333333)"><path d="M120 402Q105 401 60 424Q20 455 25 470Q20 490 60 520L147 565M64 461L88 453L150 460L240 484L285 491C320 505 340 535 338 570C338 640 300 700 255 722L190 747L140 758H68L54 752"/></g>
</svg>
</div>

<script>
/* model tree */
const use=(id,w,h,c='')=>`<svg width="${w}" height="${h}" class="${c}"><use href="#${id}"/></svg>`;
const names=['1','2','4','6','10','12','14','15','17','27','30','32','35','37','41','20 x 2','9 x 2','19 x 2','18 x 2','24 x 4','22 x 2','25 x 2','3 x 10'];
const row=(n,lock='',q='',ref='')=>`<tr><td>${n}</td><td></td><td>${lock}</td><td></td><td>${q}</td><td>${ref}</td><td></td></tr>`;
const nm=h=>`<div class="nm d-flex align-items-center">${h}</div>`;
const sign=p=>`<button class="bare toggle" aria-label="展开"><svg width="15" height="15"><path d="${p?'M2 7.5h11M7.5 2v11':'M2 7.5h11'}" stroke="#1e1e1e" stroke-width="1.4"/></svg></button>`;
let h=row(nm(`<span class="branch top"></span><svg width="33" height="30" viewBox="0 0 33 30"><path d="M5 28H1V2l2-1h6l2 3h16v4M5 28L10 11h22l-5 17z" fill="#fff" stroke="#444" stroke-width="1.2"/></svg>截面`));
h+=row(nm(`<span style="width:8px"></span>${sign(0)}<span class="stub"></span><input type="checkbox" class="tick me-1" checked id="root" style="margin-left:1px">${use('i-asm',29,35,'me-1')}<label for="root" class="fw-bold">assembly1（顺序：时间顺序）</label>`),
 `<svg width="30" height="30" viewBox="0 0 30 30"><path d="M1 1h23l5 5v23H1zM8 1v8h13V1M17 3v4M5 29V13h20v16M9 19h12M9 23h12" fill="#fff" stroke="#333"/></svg>`,'<b>42</b>');
h+=row(nm(`<span style="width:40px"></span>${sign(1)}<span class="stub"></span>${use('i-con',32,32,'me-1')}约束`),'','51');
const dash='<svg width="30" height="30"><path d="M.5.5h29v29H.5z" fill="#fff" stroke="#333" stroke-dasharray="5 3"/></svg>';
names.forEach((n,i)=>h+=row(nm(`<span class="branch${i==names.length-1?' end':''}"></span><input type="checkbox" class="tick me-1" checked id="n${i}">${use('i-cube',28,30,'me-1')}<label for="n${i}" class="ps-1">${n}</label>`),dash,'','模型 ("MODEL")'));
for(let i=0;i<12;i++)h+=row(nm(''));
document.getElementById('rows').innerHTML=h;

/* resource bar */
const s=(b,vb='0 0 48 48')=>`<svg width="48" height="48" viewBox="${vb}">${b}</svg>`;
const res=[['角色设置',use('i-gear',34,34)],['装配导航器',use('i-blocks',36,48)],['约束导航器',use('i-con',48,48)],['部件导航器',use('i-brk',48,48)],['重用库',use('i-book',36,48)],
['视图管理器',s('<use href="#i-brk" x="2" y="11" width="40" height="37"/><path d="M22 1v12M43 10v28M22 5l21 12M22 5l5 0M22 5l2 5M43 17l-5 0M43 17l-2-5M31 2l5 5M36 2l-5 5" fill="none" stroke="#e87400" stroke-width="1.4"/>')],
['检查工具',s('<path d="M1 26L24 13l22 12v8L22 47 1 34z" fill="url(#gg)" stroke="#333"/><path d="M1 26l21 13 24-14M1 24V12M24 12V1M1 17L24 5M1 17l3-5M1 17l6 0M24 5l-6 0M24 5l-3 5" fill="none" stroke="#e87400" stroke-width="1.3"/><path d="M1 26l21 13 24-14" fill="none" stroke="#333"/><path d="M32 36L21 47" stroke="#222" stroke-width="5"/><path d="M31 37L22 46" stroke="#fff" stroke-width="2"/><circle cx="37" cy="29" r="10" fill="#fff" stroke="#222"/>')],
['信息',s('<circle cx="18" cy="30" r="17" fill="url(#gd)" stroke="#555"/><circle cx="18" cy="30" r="17" fill="#777" opacity=".6"/><path d="M18 26v15" stroke="#fff" stroke-width="1.4"/><circle cx="18" cy="22" r="1.6" fill="#fff"/><path d="M18 8a22 22 0 0 1 22 22M18 2a28 28 0 0 1 28 28" fill="none" stroke="#999" stroke-width="1.4"/>')],
['浏览器',s('<path d="M1 1h46v46H1zM1 7h46" fill="none" stroke="#333" stroke-width="1.3"/><path d="M36 4h8" stroke="#333" stroke-dasharray="2 1"/><circle cx="24" cy="27" r="15" fill="url(#gt)" stroke="#0a5a78"/><path d="M11 22q5-9 13-8l-1 4 4 2-6 4-3 6-5-4zM28 22l8-2 2 6-5 9-2-7-4-2zM17 33l5 2-1 5-4-3z" fill="#fff" opacity=".85"/>')],
['历史记录',s('<circle cx="24" cy="24" r="23" fill="none" stroke="#444" stroke-width="1.2"/><path d="M24 9v15H13M24 1v5M24 42v5M1 24h5M42 24h5" fill="none" stroke="#333" stroke-width="1.3"/>')],
['工具',s('<path d="M1 7h5V1h12v6h29v40H1z" fill="#fff" stroke="#333" stroke-width="1.3"/><path d="M12 17l25 25" stroke="#444" stroke-width="8"/><path d="M12 17l25 25" stroke="#bbb" stroke-width="6"/><path d="M6 13l5 5 5-1 1-5-4-4q7-1 9 7l-3 8q-8 3-13-4z" fill="#ccc" stroke="#444"/><path d="M12 42L32 20" stroke="#444" stroke-width="8"/><path d="M12 42L32 20" stroke="#888" stroke-width="6"/><path d="M28 14l5-5 8 4 3 6-3 3-5-5-4 4z" fill="#ddd" stroke="#444"/>')],
['可视化',s('<path d="M4 2h17v44H4z" fill="url(#gr)"/><use href="#i-wand" width="48" height="48"/>')],
['加工',s('<path d="M3 30l40-14M15 20h32M18 12h29M24 26h18" stroke="#2a62c8" stroke-width="1.6"/><path d="M4 40l14-6M4 46l10-12M22 46L12 34M2 36l22 6" stroke="#ffd800" stroke-width="3"/><path d="M6 4h12v34l-6 3-6-3z" fill="#3f9af0" stroke="#1a58b8"/><path d="M6 14l12-9M6 22l12-9M6 30l12-9M8 37l10-8" stroke="#0d4cb0" stroke-width="1.6"/><use href="#i-wand" width="48" height="48"/>')]];
document.getElementById('resbar').innerHTML=res.map((r,i)=>`<button class="bare resbtn d-flex align-items-center justify-content-center${i==0?' first':''}${i==1?' on':''}" aria-label="${r[0]}">${r[1]}</button>`).join('');

/* selection icons */
const t='<g fill="none" stroke="#a0a0a0" stroke-width="1.2">',x='<circle cx="11" cy="11" r="6"/><path d="M11 0v22M0 11h22"/>';
const sel=[t+x+'<g transform="rotate(-50 23 24)"><rect x="14" y="18" width="12" height="9" rx="4.5"/><rect x="21" y="20" width="12" height="9" rx="4.5"/></g></g>',
t+x+'<path d="M15 18h16l-6 8v7l-3-3v-4z" fill="#fff"/></g>',
t+'<path d="M7 1H2v26h5M20 1h5v10"/><g transform="translate(3 3)">'+x+'</g><path d="M20 22l-3-3 5-2M18 20c8-1 13 4 12 12"/></g>',
t+'<path d="M1 9l12-8 12 7v10M1 9v14l12 7M1 9l12 6 12-7"/><g transform="translate(12 13) scale(.9)">'+x+'</g></g>',
t+'<path d="M14 23H1V1h23v12"/><g transform="translate(13 13) scale(.9)">'+x+'</g></g>'];
let q=sel.map(b=>`<button class="bare selbtn d-flex align-items-center justify-content-center" aria-label="捕捉">${'<svg width="34" height="34">'+b+'</svg>'}</button>`).join('');
q+='<button class="bare d-flex align-items-center" aria-label="更多捕捉" style="width:22px;padding-left:4px"><i class="caret"></i></button>';
const hex=(a,b,o)=>`<button class="bare selbtn d-flex align-items-center justify-content-center" aria-label="显示"><svg width="32" height="32" opacity="${o}"><path d="M1 9l15-8 14 8v15l-14 7-15-7z" fill="url(#gg)" stroke="${a}"/><path d="M1 9l15 5 14-5M16 14v16" fill="none" stroke="${a}"/>${b}</svg></button>`;
q+=`<span style="width:9px"></span>`+hex('#bbb','',.6)+hex('#444','<path d="M16 1l14 8M16 17l14 8" stroke="#e06a00" stroke-width="1.6"/>',1);
document.getElementById('selicons').innerHTML=q;

/* round parts of the model: circles seen along the spindle axis */
let out='',gid=0;
function grad(cx,cy,r){const id='cg'+gid++;out+=`<linearGradient id="${id}" gradientUnits="userSpaceOnUse" x1="${cx+.454*r}" y1="${cy-.927*r}" x2="${cx-.454*r}" y2="${cy+.927*r}"><stop offset="0" stop-color="#ffc850"/><stop offset=".04" stop-color="#ffe070"/><stop offset=".14" stop-color="#ffab24"/><stop offset=".25" stop-color="#ee980e"/><stop offset=".45" stop-color="#e2930a"/><stop offset=".68" stop-color="#b0760e"/><stop offset="1" stop-color="#7a5520"/></linearGradient>`;return `url(#${id})`}
function ring(cx,cy,r){let d='';for(let i=0;i<120;i++){const a=i*Math.PI/60,c=Math.cos(a),n=Math.sin(a);d+=(i?'L':'M')+(cx+.71*r*c-.1945*r*n).toFixed(1)+' '+(cy+r*n).toFixed(1)}return d+'z'}
const circ=(cx,cy,r,f,c='f')=>out+=`<path class="${c}" d="${ring(cx,cy,r)}" fill="${f}"/>`;
function cyl(a,b,c,d,r,face){const g=grad(a,b,r),u=.4005*r,v=.953*r;circ(a,b,r,g);
 out+=`<path d="M${a+u} ${b-v}L${c+u} ${d-v}L${c-u} ${d+v}L${a-u} ${b+v}z" fill="${g}"/><path class="ln" d="M${a+u} ${b-v}L${c+u} ${d-v}M${a-u} ${b+v}L${c-u} ${d+v}"/>`;
 if(face)circ(c,d,r,face);else out+=`<path d="${ring(c,d,r)}" fill="${g}"/>`}
const bg=grad(640,690,545);
out+=`<path class="f" fill="${bg}" d="M378 328C260 490 214 650 214 800C214 980 290 1130 378 1175L780 1385L1240 350L925 203C860 165 780 155 700 180C600 210 500 310 453 362z"/><path class="ln" d="M925 203C880 190 840 195 800 200C580 240 352 500 352 880C352 1050 420 1180 480 1228"/>`;
[[420,976,15,27],[526,1028,28,52],[500,1200,20,48,-48],[605,1254,10,26,-48]].forEach(e=>out+=`<ellipse class="f" cx="${e[0]}" cy="${e[1]}" rx="${e[2]}" ry="${e[3]}" transform="rotate(${e[4]||-14} ${e[0]} ${e[1]})" fill="url(#slot)"/>`);
cyl(985,858,1029,880,545,'#d78e08');
[[1167,406],[896,497],[780,636],[704,812],[704,1166],[896,1353],[1365,592]].forEach(p=>circ(p[0],p[1],37,'url(#hole)'));
cyl(1028,881,1151,941,417,'#d78e08');
out+=`<path d="M851 1000C860 760 1000 560 1230 529" fill="none" stroke="#ffd800" stroke-width="3"/>`;
out+='<g clip-path="url(#bore)">';circ(1151,941,396,'url(#wall)');
circ(1120,926,390,'none','ln');circ(1100,916,385,'#c9860a');circ(1092,912,380,'url(#wall)');circ(1040,887,370,'url(#wall)');circ(991,863,365,'#d78e08');out+='</g>';
out+=`<path d="${ring(1151,941,405)}" fill="none" stroke="#0ab010" stroke-width="2" stroke-dasharray="9 8"/>`;
circ(1151,941,396,'none','ln');
out+=`<path class="f" fill="#c58509" d="M955 950C930 880 970 790 1030 768z"/>`;
cyl(1147,936,1211,963,270,'#d78e08');cyl(1219,974,1298,1007,254);
const sg=grad(1298,1007,262);circ(1298,1007,262,sg);
out+=`<path d="M1403 757L1640 873L1395 1373L1193 1257z" fill="${sg}"/><path class="ln" d="M1403 757L1540 824M1193 1257L1300 1312"/>`;
cyl(1514,1120,1586,1155,347);circ(1586,1155,347,'none','ln');cyl(1586,1155,1636,1180,347,'#d78e08');
circ(1417,1262,30,'url(#hole)');
[[78,165],[332,294],[78,607],[78,1052],[332,1179]].forEach(p=>out+=`<ellipse cx="${p[0]-3}" cy="${p[1]}" rx="18" ry="29" transform="rotate(-12 ${p[0]} ${p[1]})" fill="#3c3f48" stroke="#222"/><ellipse cx="${p[0]+1}" cy="${p[1]-2}" rx="13" ry="24" transform="rotate(-12 ${p[0]} ${p[1]})" fill="#8b8f9a"/><ellipse cx="${p[0]+5}" cy="${p[1]+3}" rx="15" ry="21" fill="#5d7bc6" opacity=".7" stroke="#334a90"/><path class="bl" d="M${p[0]-6} ${p[1]-20}l20 40M${p[0]+8} ${p[1]-22}v44"/>`);
document.getElementById('solids').innerHTML=out;

/* constraint symbols */
let m='';const put=(id,a,b)=>m+=`<use href="#${id}" x="${a-8}" y="${b-8}" width="16" height="16"/>`;
const A=(id,l)=>l.forEach(p=>put(id,1310+p[0]*.446429,780+p[1]*.408163)),B=(id,l)=>l.forEach(p=>put(id,1880+p[0]*.344388,1040+p[1]*.377551));
A('i-mark',[[575,460],[508,512],[760,620],[855,747],[575,902],[826,1031],[1088,1082],[1047,1170],[1415,1024],[814,134],[834,151]]);
A('i-tie',[[604,173]]);A('i-tiev',[[750,497],[855,480],[758,745],[632,780],[892,812],[1026,880],[1356,1048],[1429,1085],[798,84],[418,1260]]);
B('i-mark',[[644,460],[558,522],[438,603],[548,638],[906,360],[906,670],[926,920],[708,1046],[541,1092],[903,1211],[988,1163]]);
B('i-tie',[[794,342],[978,597],[623,583],[784,972]]);B('i-tiev',[[652,700],[820,813],[533,777]]);
document.getElementById('marks').innerHTML=m;
</script>
</body>
</html>
